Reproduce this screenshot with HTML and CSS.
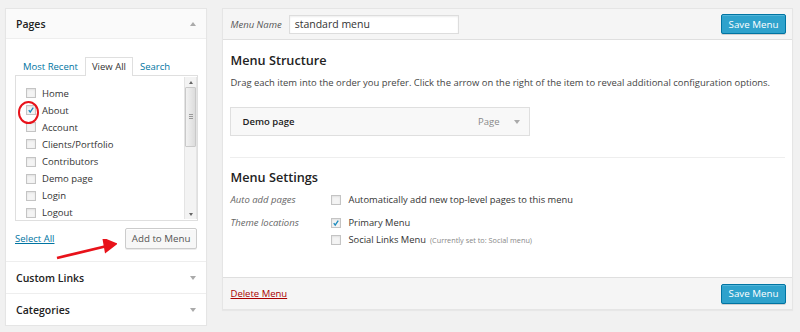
FILE: index.html
```html
<!DOCTYPE html>
<html>

<head>
    <title>Menus</title>
    <meta charset="UTF-8">
    <link rel="stylesheet" href="styles.css">
</head>

<body>
    <div class="wrap">
        <aside class="side">
            <section class="box">
                <h3 class="box-title">Pages <span class="tri up"></span></h3>
                <div class="box-inside">
                    <ul class="tabs">
                        <li><a href="#">Most Recent</a></li>
                        <li class="active">View All</li>
                        <li><a href="#">Search</a></li>
                    </ul>
                    <div class="tab-panel">
                        <ul class="checklist">
                            <li><span class="cb"></span>Home</li>
                            <li><span class="cb checked"><svg viewBox="0 0 10 10"><path d="M2.2 5.2 L4 7.6 L7.8 2" /></svg></span>About</li>
                            <li><span class="cb"></span>Account</li>
                            <li><span class="cb"></span>Clients/Portfolio</li>
                            <li><span class="cb"></span>Contributors</li>
                            <li><span class="cb"></span>Demo page</li>
                            <li><span class="cb"></span>Login</li>
                            <li><span class="cb"></span>Logout</li>
                            <li><span class="cb"></span>Members</li>
                        </ul>
                        <div class="scrollbar">
                            <span class="sb-arrow"><span class="tri tiny up"></span></span>
                            <span class="sb-thumb"><span class="grip"></span></span>
                            <span class="sb-fill"></span>
                            <span class="sb-arrow"><span class="tri tiny"></span></span>
                        </div>
                    </div>
                    <div class="box-actions">
                        <a href="#" class="select-all">Select All</a>
                        <button class="btn">Add to Menu</button>
                    </div>
                </div>
            </section>
            <section class="box closed">
                <h3 class="box-title">Custom Links <span class="tri"></span></h3>
            </section>
            <section class="box closed">
                <h3 class="box-title">Categories <span class="tri"></span></h3>
            </section>

            <!-- Annotations drawn over the screenshot. -->
            <span class="mark-circle"></span>
            <svg class="mark-arrow" width="62" height="22" viewBox="0 0 62 22">
                <line x1="2" y1="19" x2="52" y2="7" />
                <polygon points="60,5 49,0.5 51,12" />
            </svg>
        </aside>

        <main class="menu-edit">
            <header class="menu-header">
                <label class="menu-name">Menu Name <span class="input">standard menu</span></label>
                <button class="btn primary">Save Menu</button>
            </header>
            <div class="menu-body">
                <h3>Menu Structure</h3>
                <p class="desc">Drag each item into the order you prefer. Click the arrow on the right of the item to reveal additional configuration options.</p>
                <div class="menu-item">
                    <span class="item-title">Demo page</span>
                    <span class="item-type">Page <span class="tri"></span></span>
                </div>
                <div class="settings">
                    <h3>Menu Settings</h3>
                    <div class="row">
                        <span class="row-label">Auto add pages</span>
                        <div class="row-opts">
                            <div class="opt"><span class="cb"></span>Automatically add new top-level pages to this menu</div>
                        </div>
                    </div>
                    <div class="row">
                        <span class="row-label">Theme locations</span>
                        <div class="row-opts">
                            <div class="opt"><span class="cb checked"><svg viewBox="0 0 10 10"><path d="M2.2 5.2 L4 7.6 L7.8 2" /></svg></span>Primary Menu</div>
                            <div class="opt"><span class="cb"></span>Social Links Menu <small>(Currently set to: Social menu)</small></div>
                        </div>
                    </div>
                </div>
            </div>
            <footer class="menu-footer">
                <a href="#" class="delete">Delete Menu</a>
                <button class="btn primary">Save Menu</button>
            </footer>
        </main>
    </div>
</body>

</html>
```

FILE: styles.css
```css
body {
    margin: 0;
    padding: 8px 7px 0 5px;
    background: #f1f1f1;
    font-family: "Open Sans", sans-serif;
    font-size: 9.5px;
    color: #444;
}

ul {
    list-style: none;
    margin: 0;
    padding: 0;
}

a {
    color: #0074a2;
}

.wrap {
    display: flex;
    align-items: flex-start;
    gap: 15px;
}

/* Left column: accordion of boxes. */
.side {
    position: relative;
    width: 203px;
    background: #fff;
    border: 1px solid #e5e5e5;
    box-shadow: 0 1px 1px rgba(0, 0, 0, 0.04);
    box-sizing: border-box;
}

.box + .box {
    border-top: 1px solid #eee;
}

.box-title {
    display: flex;
    justify-content: space-between;
    align-items: center;
    margin: 0;
    height: 29px;
    padding: 0 10px;
    font-size: 10.5px;
    font-weight: 600;
    color: #222;
    background: #fafafa;
    border-bottom: 1px solid #eee;
}

.box.closed .box-title {
    background: #fff;
    border-bottom: 0;
    height: 31px;
}

.tri {
    width: 0;
    height: 0;
    border-left: 3.5px solid transparent;
    border-right: 3.5px solid transparent;
    border-top: 4px solid #aaa;
}

.tri.up {
    border-top: 0;
    border-bottom: 4px solid #aaa;
}

.tri.tiny {
    border-left-width: 2.5px;
    border-right-width: 2.5px;
    border-top-color: #666;
    border-top-width: 3px;
}

.tri.tiny.up {
    border-bottom: 3px solid #666;
}

.box-inside {
    padding: 18px 8px 12px 9px;
}

.tabs {
    display: flex;
    height: 18px;
    line-height: 18px;
    padding-left: 1px;
}

.tabs li {
    padding: 0 6px;
    border: 1px solid transparent;
    border-bottom: 0;
}

.tabs a {
    text-decoration: none;
}

.tabs .active {
    border-color: #dfdfdf;
    background: #fff;
    color: #333;
    margin-bottom: -1px;
    position: relative;
}

.tab-panel {
    display: flex;
    height: 144px;
    border: 1px solid #dfdfdf;
    overflow: hidden;
}

.checklist {
    flex: 1;
    padding: 8.5px 0 0 10px;
}

.checklist li {
    display: flex;
    align-items: center;
    height: 17.14px;
    color: #333;
}

.cb {
    flex: none;
    display: inline-flex;
    width: 8px;
    height: 8px;
    margin-right: 6px;
    border: 1px solid #c4c4c4;
    background: #f4f4f4;
    box-shadow: inset 0 1px 2px rgba(0, 0, 0, 0.08);
}

.cb svg {
    width: 8px;
    height: 8px;
    fill: none;
    stroke: #1e8cbe;
    stroke-width: 1.7;
}

.scrollbar {
    display: flex;
    flex-direction: column;
    width: 11px;
    margin: 1px 0 1px;
    background: #f3f3f3;
    border-left: 1px solid #e4e4e4;
    border-right: 1px solid #e4e4e4;
}

.sb-arrow {
    display: flex;
    justify-content: center;
    align-items: center;
    height: 10px;
}

.sb-thumb {
    display: flex;
    justify-content: center;
    align-items: center;
    height: 58px;
    border: 1px solid #c9c9c9;
    border-radius: 1px;
    background: linear-gradient(to right, #f2f2f2, #dcdcdc);
}

.grip {
    width: 4px;
    height: 6px;
    background: repeating-linear-gradient(#999 0 1px, transparent 1px 2px);
}

.sb-fill {
    flex: 1;
}

.box-actions {
    display: flex;
    justify-content: space-between;
    align-items: center;
    margin-top: 7px;
    padding-right: 1px;
}

.btn {
    height: 21px;
    padding: 0 6px;
    font-family: inherit;
    font-size: 9.75px;
    color: #555;
    background: #f7f7f7;
    border: 1px solid #ccc;
    border-radius: 2px;
    box-shadow: inset 0 1px 0 #fff, 0 1px 0 rgba(0, 0, 0, 0.08);
}

.btn.primary {
    height: 20px;
    width: 65px;
    padding: 0;
    color: #fff;
    background: #2ea2cc;
    border-color: #0074a2;
    box-shadow: inset 0 1px 0 rgba(120, 200, 230, 0.5), 0 1px 0 rgba(0, 0, 0, 0.15);
}

.mark-circle {
    position: absolute;
    left: 12px;
    top: 92px;
    width: 17px;
    height: 19px;
    border: 2.5px solid #e8121a;
    border-radius: 50%;
}

.mark-arrow {
    position: absolute;
    left: 49px;
    top: 230px;
    fill: #e8121a;
    stroke: #e8121a;
    stroke-width: 2.8;
}

/* Right column: menu editor. */
.menu-edit {
    width: 570px;
    background: #fff;
    border: 1px solid #e5e5e5;
    box-shadow: 0 1px 1px rgba(0, 0, 0, 0.04);
}

.menu-header,
.menu-footer {
    display: flex;
    justify-content: space-between;
    align-items: center;
    height: 30px;
    padding: 0 6px 0 7px;
    background: #f5f5f5;
}

.menu-header {
    border-bottom: 1px solid #dfdfdf;
}

.menu-footer {
    height: 31px;
    border-top: 1px solid #dfdfdf;
}

.menu-name {
    display: flex;
    align-items: center;
    gap: 7px;
    font-style: italic;
    font-size: 9.5px;
    color: #555;
}

.input {
    display: inline-block;
    width: 158px;
    height: 17px;
    line-height: 17px;
    padding: 0 5px;
    font-style: normal;
    font-size: 10.5px;
    color: #333;
    background: #fff;
    border: 1px solid #ddd;
    box-shadow: inset 0 1px 2px rgba(0, 0, 0, 0.07);
}

.menu-body {
    padding: 10px 7px 29px;
}

.menu-body h3 {
    margin: 0;
    line-height: 20px;
    font-size: 12.7px;
    font-weight: 600;
    color: #222;
}

.desc {
    margin: 5px 0 0;
    line-height: 15px;
    font-size: 9.45px;
    white-space: nowrap;
    color: #444;
}

.menu-item {
    display: flex;
    justify-content: space-between;
    align-items: center;
    width: 278px;
    height: 27px;
    margin-top: 17px;
    padding: 0 9px 0 11px;
    background: #f8f8f8;
    border: 1px solid #dfdfdf;
}

.item-title {
    font-weight: 600;
    color: #222;
}

.item-type {
    display: flex;
    align-items: center;
    gap: 15px;
    color: #888;
}

.settings {
    margin-top: 21px;
    padding-top: 9px;
    border-top: 1px solid #eee;
}

.row {
    display: flex;
    margin-top: 4px;
}

.row + .row {
    margin-top: 6px;
}

.row-label {
    width: 101px;
    line-height: 17px;
    font-style: italic;
    color: #666;
}

.opt {
    display: flex;
    align-items: center;
    height: 17px;
    font-size: 9.35px;
    color: #333;
}

.opt .cb {
    margin-right: 7px;
}

.opt small {
    margin-left: 4px;
    font-size: 7.3px;
    color: #888;
}

.delete {
    color: #a00;
}
```
